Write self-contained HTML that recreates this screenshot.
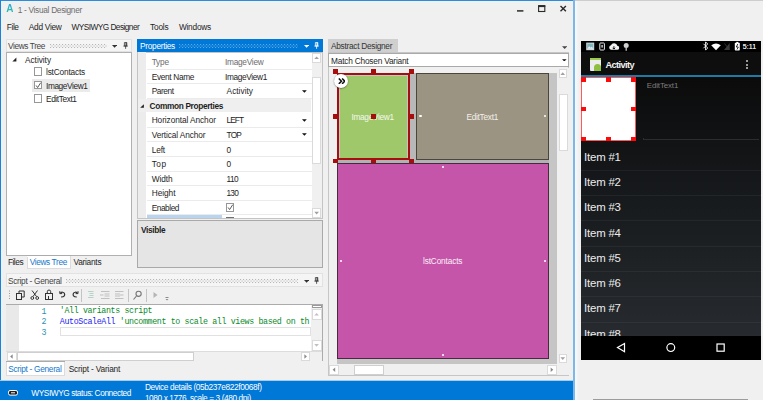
<!DOCTYPE html>
<html><head><meta charset="utf-8"><title>1 - Visual Designer</title>
<style>
html,body{margin:0;padding:0;background:#f0f0f0;}
#w{position:relative;width:763px;height:400px;overflow:hidden;background:#f0f0f0;font-family:"Liberation Sans",sans-serif;}
.b{position:absolute;display:block;box-sizing:border-box;}
.t{position:absolute;white-space:nowrap;display:block;}
.m{font-family:"Liberation Mono",monospace;}
</style></head>
<body><div id="w">
<div class="b" style="left:0.00px;top:0.00px;width:575.00px;height:400.00px;background:#f0f0f0;"></div>
<div class="b" style="left:0.00px;top:0.00px;width:575.00px;height:1.00px;background:#2b8ddb;"></div>
<div class="b" style="left:0.00px;top:0.00px;width:1.30px;height:400.00px;background:#1883d7;"></div>
<div class="b" style="left:573.00px;top:0.00px;width:2.00px;height:400.00px;background:#7db6e9;"></div>
<span class="t" style="left:6.20px;top:3.40px;font-size:10px;line-height:12.00px;color:#25b9a6;letter-spacing:0.000px;font-weight:bold;background:linear-gradient(#35a5dc,#1fc79a);-webkit-background-clip:text;background-clip:text;color:transparent;">A</span>
<span class="t" style="left:17.70px;top:5.82px;font-size:8.3px;line-height:9.96px;color:#6d6d6d;letter-spacing:-0.298px;">1 - Visual Designer</span>
<svg class="b" style="left:510px;top:0;width:64px;height:18px" viewBox="510 0 64 18"><g stroke="#2a2a2a" stroke-width="1.1" fill="none"><path d="M517 10.900h6.400" stroke-width="1.500"/><rect x="538.600" y="6" width="6.200" height="5.500"/><path d="M538.100 6.100h7.200" stroke-width="2"/><path d="M560.500 6l5.400 5.300M565.900 6l-5.400 5.300" stroke-width="1.400"/></g></svg>
<span class="t" style="left:6.80px;top:23.22px;font-size:8.3px;line-height:9.96px;color:#1e1e1e;letter-spacing:-0.394px;">File</span>
<span class="t" style="left:28.80px;top:23.22px;font-size:8.3px;line-height:9.96px;color:#1e1e1e;letter-spacing:-0.264px;">Add View</span>
<span class="t" style="left:71.50px;top:23.22px;font-size:8.3px;line-height:9.96px;color:#1e1e1e;letter-spacing:-0.554px;">WYSIWYG Designer</span>
<span class="t" style="left:150.10px;top:23.22px;font-size:8.3px;line-height:9.96px;color:#1e1e1e;letter-spacing:-0.215px;">Tools</span>
<span class="t" style="left:178.90px;top:23.22px;font-size:8.3px;line-height:9.96px;color:#1e1e1e;letter-spacing:-0.224px;">Windows</span>
<div class="b" style="left:5.50px;top:38.50px;width:126.00px;height:13.50px;background:#f5f5f5;box-shadow:inset 0 0 0 1px #e2e2e2;"></div>
<span class="t" style="left:8.00px;top:41.72px;font-size:8.3px;line-height:9.96px;color:#444;letter-spacing:-0.390px;">Views Tree</span>
<svg class="b" style="left:50px;top:43.70px;width:57px;height:4.4px"><defs><pattern id="p14" width="3" height="3" patternUnits="userSpaceOnUse"><rect x="0" y="0" width="1.1" height="1.1" fill="#b8b8b8"/><rect x="1.5" y="1.5" width="1.1" height="1.1" fill="#b8b8b8"/></pattern></defs><rect width="100%" height="100%" fill="url(#p14)"/></svg>
<svg class="b" style="left:112.20px;top:45.00px;width:5.2px;height:2.8px" viewBox="0 0 10 5"><path d="M0 0h10L5 5z" fill="#333"/></svg>
<svg class="b" style="left:122.90px;top:41.70px;width:5.2px;height:7px" viewBox="0 0 6 8"><g fill="none" stroke="#333" stroke-width="0.9"><path d="M1.6 0.6h2.8v4h-2.8z"/><path d="M3.6 0.6v4" stroke-width="1.3"/><path d="M0.4 4.7h5.2M3 4.7v3.2"/></g></svg>
<div class="b" style="left:5.50px;top:51.50px;width:126.00px;height:204.50px;background:#fff;box-shadow:inset 0 0 0 1px #b0b0b0;"></div>
<svg class="b" style="left:11.5px;top:57px;width:5px;height:5px" viewBox="0 0 5 5"><path d="M4.4 0.4v4h-4z" fill="#222"/></svg>
<span class="t" style="left:25.00px;top:55.62px;font-size:8.3px;line-height:9.96px;color:#1e1e1e;letter-spacing:-0.036px;">Activity</span>
<div class="b" style="left:33.80px;top:67.30px;width:8.60px;height:8.60px;background:#fff;box-shadow:inset 0 0 0 1px #979797;"></div>
<span class="t" style="left:46.00px;top:68.32px;font-size:8.3px;line-height:9.96px;color:#1e1e1e;letter-spacing:-0.187px;">lstContacts</span>
<div class="b" style="left:32.00px;top:78.70px;width:58.00px;height:12.90px;background:#ebebeb;"></div>
<div class="b" style="left:33.80px;top:80.80px;width:8.60px;height:8.60px;background:#fff;box-shadow:inset 0 0 0 1px #979797;"><svg style="position:absolute;left:0;top:0;width:8.6px;height:8.6px" viewBox="0 0 10 10"><path d="M2.4 5.2l1.8 2.4L7.8 2" fill="none" stroke="#333" stroke-width="0.95"/></svg></div>
<span class="t" style="left:46.00px;top:81.62px;font-size:8.3px;line-height:9.96px;color:#1e1e1e;letter-spacing:-0.402px;">ImageView1</span>
<div class="b" style="left:33.80px;top:94.20px;width:8.60px;height:8.60px;background:#fff;box-shadow:inset 0 0 0 1px #979797;"></div>
<span class="t" style="left:46.00px;top:95.02px;font-size:8.3px;line-height:9.96px;color:#1e1e1e;letter-spacing:-0.404px;">EditText1</span>
<span class="t" style="left:7.90px;top:258.32px;font-size:8.3px;line-height:9.96px;color:#1e1e1e;letter-spacing:-0.465px;">Files</span>
<div class="b" style="left:26.60px;top:255.80px;width:44.00px;height:13.40px;background:#fff;box-shadow:inset 0 0 0 1px #dcdcdc;"></div>
<div class="b" style="left:27.40px;top:255.80px;width:42.40px;height:1.00px;background:#fff;"></div>
<div class="b" style="left:26.60px;top:255.00px;width:44.00px;height:1.00px;background:#ababab;"></div>
<span class="t" style="left:29.70px;top:258.32px;font-size:8.3px;line-height:9.96px;color:#1777c9;letter-spacing:-0.370px;">Views Tree</span>
<span class="t" style="left:73.50px;top:258.32px;font-size:8.3px;line-height:9.96px;color:#1e1e1e;letter-spacing:-0.254px;">Variants</span>
<div class="b" style="left:137.00px;top:39.20px;width:186.00px;height:12.80px;background:#0078d7;"></div>
<span class="t" style="left:140.00px;top:41.82px;font-size:8.3px;line-height:9.96px;color:#fff;letter-spacing:-0.283px;">Properties</span>
<svg class="b" style="left:179px;top:43.70px;width:119px;height:4.4px"><defs><pattern id="p35" width="3" height="3" patternUnits="userSpaceOnUse"><rect x="0" y="0" width="1.1" height="1.1" fill="#5aa9e6"/><rect x="1.5" y="1.5" width="1.1" height="1.1" fill="#5aa9e6"/></pattern></defs><rect width="100%" height="100%" fill="url(#p35)"/></svg>
<svg class="b" style="left:303.70px;top:45.10px;width:5.2px;height:2.8px" viewBox="0 0 10 5"><path d="M0 0h10L5 5z" fill="#fff"/></svg>
<svg class="b" style="left:313.90px;top:41.80px;width:5.2px;height:7px" viewBox="0 0 6 8"><g fill="none" stroke="#fff" stroke-width="0.9"><path d="M1.6 0.6h2.8v4h-2.8z"/><path d="M3.6 0.6v4" stroke-width="1.3"/><path d="M0.4 4.7h5.2M3 4.7v3.2"/></g></svg>
<div class="b" style="left:137.00px;top:52.00px;width:186.00px;height:167.30px;background:#fff;box-shadow:inset 0 0 0 1px #c4c4c4;"></div>
<div class="b" style="left:137.80px;top:52.00px;width:8.70px;height:166.00px;background:#ececec;"></div>
<span class="t" style="left:151.70px;top:58.32px;font-size:8.3px;line-height:9.96px;color:#6d6d6d;letter-spacing:-0.174px;">Type</span>
<span class="t" style="left:225.00px;top:58.32px;font-size:8.3px;line-height:9.96px;color:#6d6d6d;letter-spacing:-0.268px;">ImageView</span>
<div class="b" style="left:146.50px;top:68.77px;width:165.00px;height:0.90px;background:#ebebeb;"></div>
<span class="t" style="left:151.70px;top:72.86px;font-size:8.3px;line-height:9.96px;color:#1e1e1e;letter-spacing:-0.317px;">Event Name</span>
<span class="t" style="left:225.00px;top:72.86px;font-size:8.3px;line-height:9.96px;color:#1e1e1e;letter-spacing:-0.352px;">ImageView1</span>
<div class="b" style="left:146.50px;top:83.31px;width:165.00px;height:0.90px;background:#ebebeb;"></div>
<span class="t" style="left:151.70px;top:87.40px;font-size:8.3px;line-height:9.96px;color:#1e1e1e;letter-spacing:-0.426px;">Parent</span>
<span class="t" style="left:226.60px;top:87.40px;font-size:8.3px;line-height:9.96px;color:#1e1e1e;letter-spacing:0.014px;">Activity</span>
<svg class="b" style="left:302.00px;top:89.73px;width:4.8px;height:2.9px" viewBox="0 0 10 5"><path d="M0 0h10L5 5z" fill="#111"/></svg>
<div class="b" style="left:146.50px;top:97.85px;width:165.00px;height:0.90px;background:#ebebeb;"></div>
<div class="b" style="left:137.80px;top:98.75px;width:173.70px;height:13.74px;background:#efefef;"></div>
<svg class="b" style="left:139.8px;top:104.32px;width:4.2px;height:4.2px" viewBox="0 0 5 5"><path d="M4.6 0.2v4.4h-4.4z" fill="#222"/></svg>
<span class="t" style="left:149.50px;top:101.94px;font-size:8.3px;line-height:9.96px;color:#1e1e1e;letter-spacing:-0.337px;font-weight:bold;">Common Properties</span>
<span class="t" style="left:151.70px;top:116.48px;font-size:8.3px;line-height:9.96px;color:#1e1e1e;letter-spacing:-0.077px;">Horizontal Anchor</span>
<span class="t" style="left:226.60px;top:116.48px;font-size:8.3px;line-height:9.96px;color:#1e1e1e;letter-spacing:-0.973px;">LEFT</span>
<svg class="b" style="left:302.00px;top:118.81px;width:4.8px;height:2.9px" viewBox="0 0 10 5"><path d="M0 0h10L5 5z" fill="#111"/></svg>
<div class="b" style="left:146.50px;top:126.93px;width:165.00px;height:0.90px;background:#ebebeb;"></div>
<span class="t" style="left:151.70px;top:131.02px;font-size:8.3px;line-height:9.96px;color:#1e1e1e;letter-spacing:-0.104px;">Vertical Anchor</span>
<span class="t" style="left:226.60px;top:131.02px;font-size:8.3px;line-height:9.96px;color:#1e1e1e;letter-spacing:-0.837px;">TOP</span>
<svg class="b" style="left:302.00px;top:133.35px;width:4.8px;height:2.9px" viewBox="0 0 10 5"><path d="M0 0h10L5 5z" fill="#111"/></svg>
<div class="b" style="left:146.50px;top:141.47px;width:165.00px;height:0.90px;background:#ebebeb;"></div>
<span class="t" style="left:151.70px;top:145.56px;font-size:8.3px;line-height:9.96px;color:#1e1e1e;letter-spacing:-0.136px;">Left</span>
<span class="t" style="left:226.50px;top:145.56px;font-size:8.3px;line-height:9.96px;color:#1e1e1e;letter-spacing:0.000px;">0</span>
<div class="b" style="left:146.50px;top:156.01px;width:165.00px;height:0.90px;background:#ebebeb;"></div>
<span class="t" style="left:151.70px;top:160.10px;font-size:8.3px;line-height:9.96px;color:#1e1e1e;letter-spacing:0.473px;">Top</span>
<span class="t" style="left:226.50px;top:160.10px;font-size:8.3px;line-height:9.96px;color:#1e1e1e;letter-spacing:0.000px;">0</span>
<div class="b" style="left:146.50px;top:170.55px;width:165.00px;height:0.90px;background:#ebebeb;"></div>
<span class="t" style="left:151.70px;top:174.64px;font-size:8.3px;line-height:9.96px;color:#1e1e1e;letter-spacing:-0.083px;">Width</span>
<span class="t" style="left:226.50px;top:174.64px;font-size:8.3px;line-height:9.96px;color:#1e1e1e;letter-spacing:-0.577px;">110</span>
<div class="b" style="left:146.50px;top:185.09px;width:165.00px;height:0.90px;background:#ebebeb;"></div>
<span class="t" style="left:151.70px;top:189.18px;font-size:8.3px;line-height:9.96px;color:#1e1e1e;letter-spacing:-0.032px;">Height</span>
<span class="t" style="left:226.50px;top:189.18px;font-size:8.3px;line-height:9.96px;color:#1e1e1e;letter-spacing:-0.783px;">130</span>
<div class="b" style="left:146.50px;top:199.63px;width:165.00px;height:0.90px;background:#ebebeb;"></div>
<span class="t" style="left:151.70px;top:203.72px;font-size:8.3px;line-height:9.96px;color:#1e1e1e;letter-spacing:-0.452px;">Enabled</span>
<div class="b" style="left:225.50px;top:203.10px;width:8.60px;height:8.60px;background:#fff;box-shadow:inset 0 0 0 1px #979797;"><svg style="position:absolute;left:0;top:0;width:8.6px;height:8.6px" viewBox="0 0 10 10"><path d="M2.4 5.2l1.8 2.4L7.8 2" fill="none" stroke="#333" stroke-width="0.95"/></svg></div>
<div class="b" style="left:146.50px;top:214.17px;width:165.00px;height:0.90px;background:#ebebeb;"></div>
<div class="b" style="left:147.00px;top:214.60px;width:75.00px;height:3.40px;background:#b9d4ee;"></div>
<div class="b" style="left:225.50px;top:216.60px;width:8.50px;height:1.40px;background:#fff;box-shadow:inset 0 0 0 1px #707070;"></div>
<div class="b" style="left:311.50px;top:52.80px;width:10.50px;height:165.00px;background:#f0f0f0;"></div>
<div class="b" style="left:311.80px;top:53.00px;width:9.70px;height:9.80px;background:#fff;box-shadow:inset 0 0 0 1px #dadada;"></div>
<svg class="b" style="left:0;top:0;width:763px;height:400px"><polygon points="314.34999999999997,59.1 318.95,59.1 316.65,56.5" fill="#a0a0a0"/></svg>
<div class="b" style="left:311.80px;top:77.30px;width:9.70px;height:86.70px;background:#fff;box-shadow:inset 0 0 0 1px #dadada;"></div>
<div class="b" style="left:311.80px;top:208.30px;width:9.70px;height:9.40px;background:#fff;box-shadow:inset 0 0 0 1px #dadada;"></div>
<svg class="b" style="left:0;top:0;width:763px;height:400px"><polygon points="314.34999999999997,211.8 318.95,211.8 316.65,214.4" fill="#a0a0a0"/></svg>
<div class="b" style="left:137.00px;top:220.30px;width:186.00px;height:48.20px;background:#e5e5e5;box-shadow:inset 0 0 0 1px #a9a9a9;"></div>
<span class="t" style="left:141.00px;top:226.32px;font-size:8.3px;line-height:9.96px;color:#1e1e1e;letter-spacing:-0.329px;font-weight:bold;">Visible</span>
<div class="b" style="left:5.50px;top:273.40px;width:317.50px;height:13.60px;background:#f5f5f5;box-shadow:inset 0 0 0 1px #e2e2e2;"></div>
<span class="t" style="left:7.90px;top:277.02px;font-size:8.3px;line-height:9.96px;color:#444;letter-spacing:-0.270px;">Script - General</span>
<svg class="b" style="left:66px;top:279.00px;width:232px;height:4.4px"><defs><pattern id="p88" width="3" height="3" patternUnits="userSpaceOnUse"><rect x="0" y="0" width="1.1" height="1.1" fill="#b8b8b8"/><rect x="1.5" y="1.5" width="1.1" height="1.1" fill="#b8b8b8"/></pattern></defs><rect width="100%" height="100%" fill="url(#p88)"/></svg>
<svg class="b" style="left:303.80px;top:280.30px;width:5.2px;height:2.8px" viewBox="0 0 10 5"><path d="M0 0h10L5 5z" fill="#333"/></svg>
<svg class="b" style="left:313.80px;top:277.00px;width:5.2px;height:7px" viewBox="0 0 6 8"><g fill="none" stroke="#333" stroke-width="0.9"><path d="M1.6 0.6h2.8v4h-2.8z"/><path d="M3.6 0.6v4" stroke-width="1.3"/><path d="M0.4 4.7h5.2M3 4.7v3.2"/></g></svg>
<svg class="b" style="left:0;top:287.3px;width:180px;height:17px" viewBox="0 288 180 17">
<g fill="#9a9a9a"><rect x="9" y="291.5" width="1" height="1"/><rect x="9" y="294" width="1" height="1"/><rect x="9" y="296.5" width="1" height="1"/><rect x="9" y="299" width="1" height="1"/></g>
<g fill="none" stroke="#333" stroke-width="1">
<rect x="16.500" y="294.500" width="5" height="6"/><path d="M19 294.500v-2.500h5.200v6H21.500"/>
<path d="M32 291.500l4.500 6M37.500 291.500l-4.500 6"/><circle cx="32.300" cy="299" r="1.400"/><circle cx="37.200" cy="299" r="1.400"/>
<rect x="45.500" y="294.500" width="7" height="6"/><path d="M47.300 294.500v-1.800a1.700 1.700 0 0 1 3.400 0v1.800"/><path d="M48.500 297v3.500h-1"/>
<path d="M61 298c3.500 0 4.200-2 3.400-3.600-0.800-1.500-2.800-1.500-3.900-0.400" stroke-width="1.200"/><path d="M59.800 292.200v2.400h2.400" stroke-width="1"/>
<path d="M76.800 298c-3.500 0-4.200-2-3.400-3.600 0.800-1.500 2.800-1.500 3.900-0.400" stroke-width="1.200"/><path d="M78 292.200v2.400h-2.400" stroke-width="1"/>
</g>
<g fill="none" stroke="#757575" stroke-width="1.100"><path d="M133.500 300.500l3-3.500"/><circle cx="138.600" cy="294.800" r="2.600"/></g>
<g stroke="#c4c4c4" stroke-width="1"><path d="M81.500 290v13M128.500 290v13M146.500 290v13"/></g>
<g stroke="#c0c0c0" stroke-width="1" fill="none"><path d="M88 292.500h5.500M89.500 294.500h4M89.500 296.500h4M88 298.500h5.500" stroke="#b5d4c4"/>
<path d="M101 292.500h8.500M101 299.500h8.500M104.500 295h5M104.500 297h5M100 296h3.500"/>
<path d="M115 292.500h8.500M115 299.500h8.500M115 295h5M115 297h5M120 296h3.500"/></g>
<path d="M153.500 293v6l4-3z" fill="#b5b5b5"/>
<g fill="#8a8a8a"><rect x="165.500" y="298" width="3" height="1"/><path d="M165.500 300h3l-1.500 1.600z"/></g>
</svg>
<div class="b" style="left:5.50px;top:304.30px;width:317.00px;height:57.20px;background:#fff;box-shadow:inset 0 0 0 1px #ababab;"></div>
<div class="b" style="left:6.30px;top:304.60px;width:12.30px;height:46.90px;background:#e9e9e9;"></div>
<span class="t m" style="left:41.40px;top:306.62px;font-size:8.3px;line-height:9.96px;color:#2b91af;letter-spacing:0.000px;">1</span>
<span class="t m" style="left:41.40px;top:317.32px;font-size:8.3px;line-height:9.96px;color:#2b91af;letter-spacing:0.000px;">2</span>
<span class="t m" style="left:41.40px;top:328.02px;font-size:8.3px;line-height:9.96px;color:#2b91af;letter-spacing:0.000px;">3</span>
<span class="t m" style="left:59.80px;top:306.42px;font-size:8.3px;line-height:9.96px;color:#0a8a2a;letter-spacing:-0.361px;">'All variants script</span>
<span class="t m" style="left:59.80px;top:317.02px;font-size:8.3px;line-height:9.96px;color:#2222ee;letter-spacing:-0.361px;">AutoScaleAll</span>
<span class="t m" style="left:119.86px;top:317.02px;font-size:8.3px;line-height:9.96px;color:#0a8a2a;letter-spacing:-0.361px;">'uncomment to scale all views based on th</span>
<div class="b" style="left:59.50px;top:327.30px;width:251.70px;height:8.70px;background:#fff;box-shadow:inset 0 0 0 1px #e1e1e1;"></div>
<div class="b" style="left:311.20px;top:304.60px;width:10.60px;height:46.90px;background:#f0f0f0;"></div>
<div class="b" style="left:311.60px;top:304.60px;width:10.00px;height:3.60px;background:#fff;box-shadow:inset 0 0 0 1px #9a9a9a;"></div>
<div class="b" style="left:311.60px;top:308.60px;width:10.00px;height:11.40px;background:#fff;box-shadow:inset 0 0 0 1px #dadada;"></div>
<svg class="b" style="left:0;top:0;width:763px;height:400px"><polygon points="314.3,315.5 318.90000000000003,315.5 316.6,312.90000000000003" fill="#c0c0c0"/></svg>
<div class="b" style="left:311.60px;top:339.50px;width:10.00px;height:11.50px;background:#fff;box-shadow:inset 0 0 0 1px #dadada;"></div>
<svg class="b" style="left:0;top:0;width:763px;height:400px"><polygon points="314.3,344.05 318.90000000000003,344.05 316.6,346.65" fill="#c0c0c0"/></svg>
<div class="b" style="left:6.30px;top:351.50px;width:315.50px;height:9.10px;background:#f0f0f0;"></div>
<div class="b" style="left:6.30px;top:351.20px;width:315.50px;height:0.80px;background:#dcdcdc;"></div>
<div class="b" style="left:6.50px;top:352.20px;width:10.00px;height:8.60px;background:#fff;box-shadow:inset 0 0 0 1px #dadada;"></div>
<svg class="b" style="left:0;top:0;width:763px;height:400px"><polygon points="12.7,354.2 12.7,358.8 10.1,356.5" fill="#8a8a8a"/></svg>
<div class="b" style="left:17.30px;top:352.20px;width:176.50px;height:8.60px;background:#fff;box-shadow:inset 0 0 0 1px #cfcfcf;"></div>
<div class="b" style="left:300.60px;top:352.20px;width:9.90px;height:8.60px;background:#fff;box-shadow:inset 0 0 0 1px #dadada;"></div>
<svg class="b" style="left:0;top:0;width:763px;height:400px"><polygon points="304.35,354.2 304.35,358.8 306.95,356.5" fill="#8a8a8a"/></svg>
<div class="b" style="left:311.20px;top:351.80px;width:10.60px;height:8.80px;background:#f0f0f0;"></div>
<div class="b" style="left:5.50px;top:361.30px;width:59.00px;height:14.90px;background:#fff;box-shadow:inset 0 0 0 1px #dcdcdc;"></div>
<div class="b" style="left:6.30px;top:361.30px;width:57.40px;height:1.00px;background:#fff;"></div>
<div class="b" style="left:5.50px;top:360.50px;width:59.00px;height:1.00px;background:#ababab;"></div>
<span class="t" style="left:8.20px;top:365.22px;font-size:8.3px;line-height:9.96px;color:#1777c9;letter-spacing:-0.301px;">Script - General</span>
<span class="t" style="left:68.70px;top:365.22px;font-size:8.3px;line-height:9.96px;color:#1e1e1e;letter-spacing:-0.173px;">Script - Variant</span>
<div class="b" style="left:328.00px;top:38.80px;width:69.70px;height:13.20px;background:#cfcfcf;"></div>
<span class="t" style="left:331.00px;top:41.82px;font-size:8.3px;line-height:9.96px;color:#333;letter-spacing:-0.280px;">Abstract Designer</span>
<svg class="b" style="left:561.90px;top:45.65px;width:5.4px;height:3.1px" viewBox="0 0 10 5"><path d="M0 0h10L5 5z" fill="#444"/></svg>
<div class="b" style="left:328.00px;top:52.00px;width:241.00px;height:324.00px;background:#f0f0f0;box-shadow:inset 0 0 0 1px #c6c6c6;"></div>
<div class="b" style="left:328.30px;top:53.30px;width:240.40px;height:13.90px;background:#fff;box-shadow:inset 0 0 0 1px #a9a9a9;"></div>
<span class="t" style="left:331.00px;top:56.92px;font-size:8.3px;line-height:9.96px;color:#1e1e1e;letter-spacing:-0.200px;">Match Chosen Variant</span>
<svg class="b" style="left:562.30px;top:58.90px;width:4.6px;height:2.6px" viewBox="0 0 10 5"><path d="M0 0h10L5 5z" fill="#111"/></svg>
<div class="b" style="left:337.00px;top:73.00px;width:220.00px;height:291.00px;background:#c5c5c5;"></div>
<div class="b" style="left:337.00px;top:160.40px;width:212.20px;height:2.40px;background:#b2b2b2;"></div>
<div class="b" style="left:409.80px;top:73.00px;width:5.90px;height:87.40px;background:#b8b8b8;"></div>
<div class="b" style="left:339.50px;top:75.70px;width:67.70px;height:82.30px;background:#9fc86a;"></div>
<div class="b" style="left:336.70px;top:73.10px;width:73.10px;height:87.30px;border:2.7px solid #a50f0f;box-sizing:border-box;"></div>
<div class="b" style="left:415.70px;top:73.10px;width:133.50px;height:86.90px;background:#9c9482;box-shadow:inset 0 0 0 1px #4a463e;"></div>
<div class="b" style="left:337.30px;top:162.80px;width:211.90px;height:196.20px;background:#c455a9;box-shadow:inset 0 0 0 1px #4a2a42;"></div>
<span class="t" style="left:351.50px;top:112.52px;font-size:8.3px;line-height:9.96px;color:#f3f8ea;letter-spacing:-0.322px;">ImageView1</span>
<span class="t" style="left:466.50px;top:112.52px;font-size:8.3px;line-height:9.96px;color:#f2f0ea;letter-spacing:-0.293px;">EditText1</span>
<span class="t" style="left:423.00px;top:256.62px;font-size:8.3px;line-height:9.96px;color:#fbeef7;letter-spacing:-0.159px;">lstContacts</span>
<div class="b" style="left:332.70px;top:69.10px;width:5.20px;height:4.60px;background:#a60d0d;"></div>
<div class="b" style="left:370.70px;top:69.10px;width:5.20px;height:4.60px;background:#a60d0d;"></div>
<div class="b" style="left:408.50px;top:69.10px;width:5.20px;height:4.60px;background:#a60d0d;"></div>
<div class="b" style="left:332.70px;top:114.00px;width:5.20px;height:4.60px;background:#a60d0d;"></div>
<div class="b" style="left:408.50px;top:114.00px;width:5.20px;height:4.60px;background:#a60d0d;"></div>
<div class="b" style="left:370.70px;top:114.00px;width:5.20px;height:4.60px;background:#a60d0d;"></div>
<div class="b" style="left:332.70px;top:158.50px;width:5.20px;height:4.60px;background:#a60d0d;"></div>
<div class="b" style="left:370.70px;top:158.50px;width:5.20px;height:4.60px;background:#a60d0d;"></div>
<div class="b" style="left:408.50px;top:158.50px;width:5.20px;height:4.60px;background:#a60d0d;"></div>
<div class="b" style="left:419.40px;top:115.20px;width:2.20px;height:2.20px;background:#fff;border-radius:50%;"></div>
<div class="b" style="left:543.60px;top:115.20px;width:2.20px;height:2.20px;background:#fff;border-radius:50%;"></div>
<div class="b" style="left:441.70px;top:165.60px;width:2.20px;height:2.20px;background:#fff;border-radius:50%;"></div>
<div class="b" style="left:339.60px;top:259.90px;width:2.20px;height:2.20px;background:#fff;border-radius:50%;"></div>
<div class="b" style="left:543.90px;top:259.90px;width:2.20px;height:2.20px;background:#fff;border-radius:50%;"></div>
<div class="b" style="left:441.70px;top:353.60px;width:2.20px;height:2.20px;background:#fff;border-radius:50%;"></div>
<div class="b" style="left:333.80px;top:73.50px;width:14.40px;height:14.40px;background:#fff;border-radius:50%;box-shadow:0 0.5px 1.5px rgba(0,0,0,.55);"></div>
<svg class="b" style="left:337.6px;top:77.6px;width:7.6px;height:6.4px" viewBox="0 0 7.6 6.4"><path d="M0.8 0.5l2.7 2.7-2.7 2.7M4.1 0.5l2.7 2.7-2.7 2.7" fill="none" stroke="#111" stroke-width="1.5"/></svg>
<div class="b" style="left:557.00px;top:68.00px;width:11.50px;height:296.00px;background:#f0f0f0;"></div>
<div class="b" style="left:558.50px;top:69.20px;width:8.50px;height:9.10px;background:#fff;box-shadow:inset 0 0 0 1px #dadada;"></div>
<svg class="b" style="left:0;top:0;width:763px;height:400px"><polygon points="560.45,74.95 565.05,74.95 562.75,72.35" fill="#a0a0a0"/></svg>
<div class="b" style="left:558.50px;top:93.80px;width:9.00px;height:57.20px;background:#fff;box-shadow:inset 0 0 0 1px #dadada;"></div>
<div class="b" style="left:558.80px;top:353.80px;width:7.90px;height:9.40px;background:#fff;box-shadow:inset 0 0 0 1px #dadada;"></div>
<svg class="b" style="left:0;top:0;width:763px;height:400px"><polygon points="560.45,357.3 565.05,357.3 562.75,359.9" fill="#a0a0a0"/></svg>
<div class="b" style="left:329.00px;top:364.00px;width:239.50px;height:11.20px;background:#f0f0f0;"></div>
<div class="b" style="left:329.00px;top:364.80px;width:10.00px;height:9.80px;background:#fff;box-shadow:inset 0 0 0 1px #dadada;"></div>
<svg class="b" style="left:0;top:0;width:763px;height:400px"><polygon points="335.2,367.40000000000003 335.2,372.00000000000006 332.6,369.70000000000005" fill="#8a8a8a"/></svg>
<div class="b" style="left:354.30px;top:364.80px;width:29.50px;height:9.80px;background:#fff;box-shadow:inset 0 0 0 1px #cfcfcf;"></div>
<div class="b" style="left:547.00px;top:364.80px;width:9.80px;height:9.80px;background:#fff;box-shadow:inset 0 0 0 1px #dadada;"></div>
<svg class="b" style="left:0;top:0;width:763px;height:400px"><polygon points="550.6999999999999,367.40000000000003 550.6999999999999,372.00000000000006 553.3,369.70000000000005" fill="#8a8a8a"/></svg>
<div class="b" style="left:0.00px;top:380.00px;width:573.00px;height:1.00px;background:#a8cce8;"></div>
<div class="b" style="left:0.00px;top:381.00px;width:573.00px;height:19.00px;background:#0078d7;"></div>
<svg class="b" style="left:8px;top:390px;width:10px;height:6px" viewBox="0 0 10 6"><rect x="0.5" y="0.5" width="9" height="4.6" rx="1.6" fill="#222" stroke="#fff" stroke-width="1"/><path d="M3 2.8h4" stroke="#fff" stroke-width="1"/></svg>
<span class="t" style="left:31.30px;top:388.82px;font-size:8.3px;line-height:9.96px;color:#fff;letter-spacing:-0.422px;">WYSIWYG status: Connected</span>
<span class="t" style="left:144.90px;top:383.12px;font-size:8.3px;line-height:9.96px;color:#fff;letter-spacing:-0.362px;">Device details (05b237e822f0068f)</span>
<span class="t" style="left:144.90px;top:393.92px;font-size:8.3px;line-height:9.96px;color:#fff;letter-spacing:-0.401px;">1080 x 1776, scale = 3 (480 dpi)</span>
<div class="b" style="left:575.00px;top:0.00px;width:188.00px;height:400.00px;background:#f0f0f0;"></div>
<div class="b" style="left:575.00px;top:0.00px;width:3.50px;height:400.00px;background:linear-gradient(90deg,#f7f9fc,#f0f0f0);"></div>
<div class="b" style="left:593.20px;top:398.60px;width:154.40px;height:1.40px;background:#9c9c9c;"></div>
<div class="b" style="left:575.00px;top:0.00px;width:188.00px;height:1.00px;background:#cdcdcd;"></div>
<div class="b" style="left:581.30px;top:40.50px;width:179.70px;height:319.30px;background:#000;"></div>
<div class="b" style="left:581.30px;top:77.00px;width:179.70px;height:259.50px;background:linear-gradient(#0b0b0b,#111315 25%,#272b2f 100%);"></div>
<div class="b" style="left:581.30px;top:52.40px;width:179.70px;height:22.80px;background:#0e0e0e;"></div>
<div class="b" style="left:581.30px;top:75.10px;width:179.70px;height:2.20px;background:#1f7ba4;"></div>
<svg class="b" style="left:581px;top:40px;width:180px;height:13px" viewBox="581 40 180 13">
<rect x="586.2" y="42.600" width="8" height="7.600" fill="#cfd8dc"/><rect x="587.200" y="43.600" width="6" height="5.200" fill="#7fb6bd"/><path d="M587.200 48.800l2-2.600 1.500 1.600 1.200-1 1.300 2z" fill="#e8f0f0"/>
<rect x="599.800" y="43" width="4.600" height="7" rx="0.800" fill="none" stroke="#e6e6e6" stroke-width="1"/><rect x="601.300" y="45" width="1.600" height="2.600" fill="#bbb"/>
<path d="M611 49.800h6a2 2 0 0 0 0.300-4 3.300 3.300 0 0 0-6.300-0.500 2.300 2.300 0 0 0 0 4.500z" fill="#f2f2f2"/><path d="M613.900 46.200v2.800M612.600 47.800l1.300 1.300 1.300-1.300" stroke="#000" stroke-width="0.900" fill="none"/>
<circle cx="626.200" cy="45.600" r="2.500" fill="#d0d0d0"/><path d="M626.200 47.500v3.200" stroke="#c8c8c8" stroke-width="1.300"/>
<path d="M703.500 43.800l4.200 4.200-2.100 2.100v-8.200l2.100 2.100-4.200 4.200" fill="none" stroke="#fff" stroke-width="0.900"/>
<path d="M711.200 45.300q4.800-3.700 9.600 0l-4.800 5z" fill="#fff"/>
<path d="M729.700 43v7h-5.700z" fill="#3a3a3a"/><path d="M724.500 43.500l5 6" stroke="#3a3a3a" stroke-width="0.800"/>
<rect x="734.800" y="42.700" width="5" height="7.800" rx="0.700" fill="#fff"/><rect x="736.300" y="41.900" width="2" height="1.200" fill="#fff"/><path d="M737.800 44l-1.500 3h2l-1.300 2.500" fill="none" stroke="#000" stroke-width="0.800"/>
</svg>
<span class="t" style="left:742.80px;top:42.70px;font-size:7.0px;line-height:8.40px;color:#e6e6e6;letter-spacing:0.049px;text-shadow:0 0 0.4px #e6e6e6;">5:11</span>
<div class="b" style="left:589.80px;top:58.00px;width:11.20px;height:13.10px;background:#ececec;border-radius:1px;"></div>
<div class="b" style="left:589.80px;top:58.00px;width:11.20px;height:2.00px;background:#9ccc4e;"></div>
<div class="b" style="left:593.80px;top:63.80px;width:7.20px;height:7.30px;background:#8fbf3f;border-radius:3.500px 3.500px 0 0;"></div>
<span class="t" style="left:605.50px;top:59.78px;font-size:9.2px;line-height:11.04px;color:#f4f4f4;letter-spacing:-0.592px;font-weight:bold;">Activity</span>
<div class="b" style="left:745.60px;top:59.80px;width:2.20px;height:2.00px;background:#9a9a9a;"></div>
<div class="b" style="left:745.60px;top:63.50px;width:2.20px;height:2.00px;background:#9a9a9a;"></div>
<div class="b" style="left:745.60px;top:67.20px;width:2.20px;height:2.00px;background:#9a9a9a;"></div>
<div class="b" style="left:581.30px;top:77.30px;width:54.70px;height:64.10px;background:#fff;"></div>
<div class="b" style="left:581.30px;top:77.30px;width:54.70px;height:64.10px;border:1px solid #ff5a5a;box-sizing:border-box;"></div>
<div class="b" style="left:581.25px;top:77.20px;width:4.90px;height:4.50px;background:#ff0a0a;"></div>
<div class="b" style="left:581.25px;top:106.90px;width:4.90px;height:4.50px;background:#ff0a0a;"></div>
<div class="b" style="left:581.25px;top:136.70px;width:4.90px;height:4.50px;background:#ff0a0a;"></div>
<div class="b" style="left:606.15px;top:77.20px;width:4.90px;height:4.50px;background:#ff0a0a;"></div>
<div class="b" style="left:606.15px;top:136.70px;width:4.90px;height:4.50px;background:#ff0a0a;"></div>
<div class="b" style="left:631.05px;top:77.20px;width:4.90px;height:4.50px;background:#ff0a0a;"></div>
<div class="b" style="left:631.05px;top:106.90px;width:4.90px;height:4.50px;background:#ff0a0a;"></div>
<div class="b" style="left:631.05px;top:136.70px;width:4.90px;height:4.50px;background:#ff0a0a;"></div>
<span class="t" style="left:646.80px;top:80.56px;font-size:7.9px;line-height:9.48px;color:#7d7d7d;letter-spacing:-0.122px;">EditText1</span>
<div class="b" style="left:642.80px;top:138.60px;width:116.70px;height:0.90px;background:#2b2e31;"></div>
<div class="b" style="left:642.80px;top:137.60px;width:0.80px;height:1.90px;background:#2b2e31;"></div>
<span class="t" style="left:584.10px;top:150.76px;font-size:11.4px;line-height:13.68px;color:#ececec;letter-spacing:-0.188px;">Item #1</span>
<div class="b" style="left:581.30px;top:169.90px;width:179.70px;height:0.80px;background:rgba(120,135,145,0.11);"></div>
<span class="t" style="left:584.10px;top:176.03px;font-size:11.4px;line-height:13.68px;color:#ececec;letter-spacing:-0.188px;">Item #2</span>
<div class="b" style="left:581.30px;top:195.17px;width:179.70px;height:0.80px;background:rgba(120,135,145,0.11);"></div>
<span class="t" style="left:584.10px;top:201.30px;font-size:11.4px;line-height:13.68px;color:#ececec;letter-spacing:-0.188px;">Item #3</span>
<div class="b" style="left:581.30px;top:220.44px;width:179.70px;height:0.80px;background:rgba(120,135,145,0.11);"></div>
<span class="t" style="left:584.10px;top:226.57px;font-size:11.4px;line-height:13.68px;color:#ececec;letter-spacing:-0.188px;">Item #4</span>
<div class="b" style="left:581.30px;top:245.71px;width:179.70px;height:0.80px;background:rgba(120,135,145,0.11);"></div>
<span class="t" style="left:584.10px;top:251.84px;font-size:11.4px;line-height:13.68px;color:#ececec;letter-spacing:-0.188px;">Item #5</span>
<div class="b" style="left:581.30px;top:270.98px;width:179.70px;height:0.80px;background:rgba(120,135,145,0.11);"></div>
<span class="t" style="left:584.10px;top:277.11px;font-size:11.4px;line-height:13.68px;color:#ececec;letter-spacing:-0.188px;">Item #6</span>
<div class="b" style="left:581.30px;top:296.25px;width:179.70px;height:0.80px;background:rgba(120,135,145,0.11);"></div>
<span class="t" style="left:584.10px;top:302.38px;font-size:11.4px;line-height:13.68px;color:#ececec;letter-spacing:-0.188px;">Item #7</span>
<div class="b" style="left:581.30px;top:321.52px;width:179.70px;height:0.80px;background:rgba(120,135,145,0.11);"></div>
<span class="t" style="left:584.10px;top:327.65px;font-size:11.4px;line-height:13.68px;color:#ececec;letter-spacing:-0.188px;">Item #8</span>
<div class="b" style="left:581.30px;top:336.30px;width:179.70px;height:23.50px;background:#000;"></div>
<svg class="b" style="left:581px;top:336px;width:180px;height:24px" viewBox="581 336 180 24"><g fill="none" stroke="#fff" stroke-width="1.200">
<path d="M624.500 343.500v8.200l-7-4.100z"/><circle cx="670.800" cy="347.600" r="3.900"/><rect x="717" y="344" width="7.200" height="7.200"/></g></svg>
</div></body></html>
